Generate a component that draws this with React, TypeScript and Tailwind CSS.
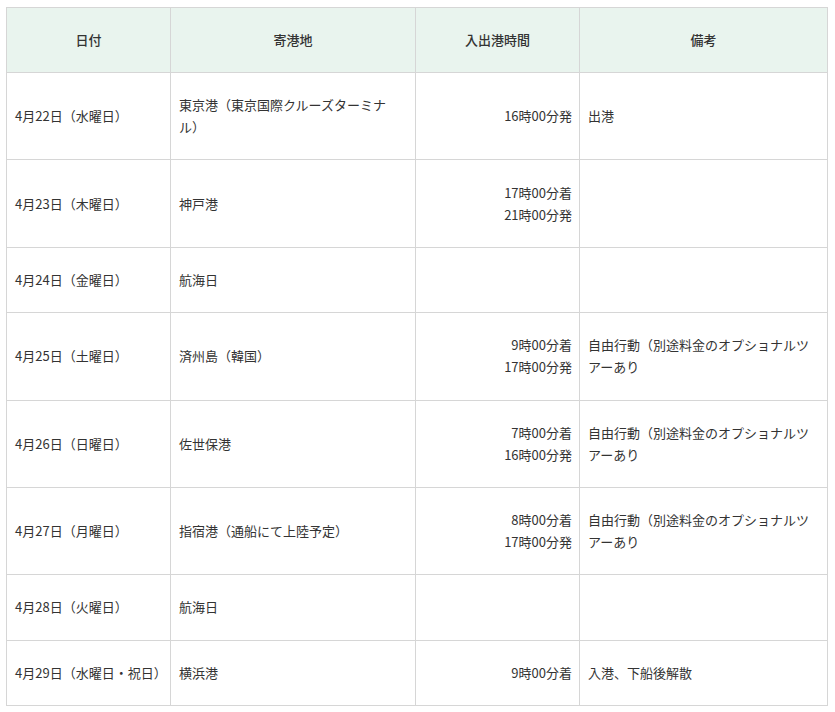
const rows: { date: string; port: string; times: string[]; note: string }[] = [
  { date: "4月22日（水曜日）", port: "東京港（東京国際クルーズターミナル）", times: ["16時00分発"], note: "出港" },
  { date: "4月23日（木曜日）", port: "神戸港", times: ["17時00分着", "21時00分発"], note: "" },
  { date: "4月24日（金曜日）", port: "航海日", times: [], note: "" },
  { date: "4月25日（土曜日）", port: "済州島（韓国）", times: ["9時00分着", "17時00分発"], note: "自由行動（別途料金のオプショナルツアーあり" },
  { date: "4月26日（日曜日）", port: "佐世保港", times: ["7時00分着", "16時00分発"], note: "自由行動（別途料金のオプショナルツアーあり" },
  { date: "4月27日（月曜日）", port: "指宿港（通船にて上陸予定）", times: ["8時00分着", "17時00分発"], note: "自由行動（別途料金のオプショナルツアーあり" },
  { date: "4月28日（火曜日）", port: "航海日", times: [], note: "" },
  { date: "4月29日（水曜日・祝日）", port: "横浜港", times: ["9時00分着"], note: "入港、下船後解散" },
];

export default function App() {
  return (
    <div
      className="bg-white pl-[6px] pt-[7px] text-[13px] leading-[22px] text-[#333]"
      style={{ fontFamily: '"Noto Sans CJK JP", "Noto Sans", sans-serif' }}
    >
      <table className="w-[821px] table-fixed border-collapse">
        <colgroup>
          <col className="w-[164px]" />
          <col className="w-[245px]" />
          <col className="w-[164px]" />
          <col className="w-[248px]" />
        </colgroup>
        <thead>
          <tr className="bg-[#e9f4ee]">
            {["日付", "寄港地", "入出港時間", "備考"].map((h) => (
              <th key={h} className="h-[65px] border border-[#d6d6d6] px-2 text-center font-medium">
                {h}
              </th>
            ))}
          </tr>
        </thead>
        <tbody>
          {rows.map((r) => (
            <tr key={r.date}>
              <td className="border border-[#d6d6d6] px-2 py-[21.2px] align-middle">{r.date}</td>
              <td className="border border-[#d6d6d6] pl-2 pr-[20px] py-[21.2px] align-middle">{r.port}</td>
              <td className="border border-[#d6d6d6] px-[7px] py-[21.2px] text-right align-middle">
                {r.times.map((t) => (
                  <div key={t}>{t}</div>
                ))}
              </td>
              <td className="border border-[#d6d6d6] px-2 py-[21.2px] align-middle">{r.note}</td>
            </tr>
          ))}
        </tbody>
      </table>
    </div>
  );
}
